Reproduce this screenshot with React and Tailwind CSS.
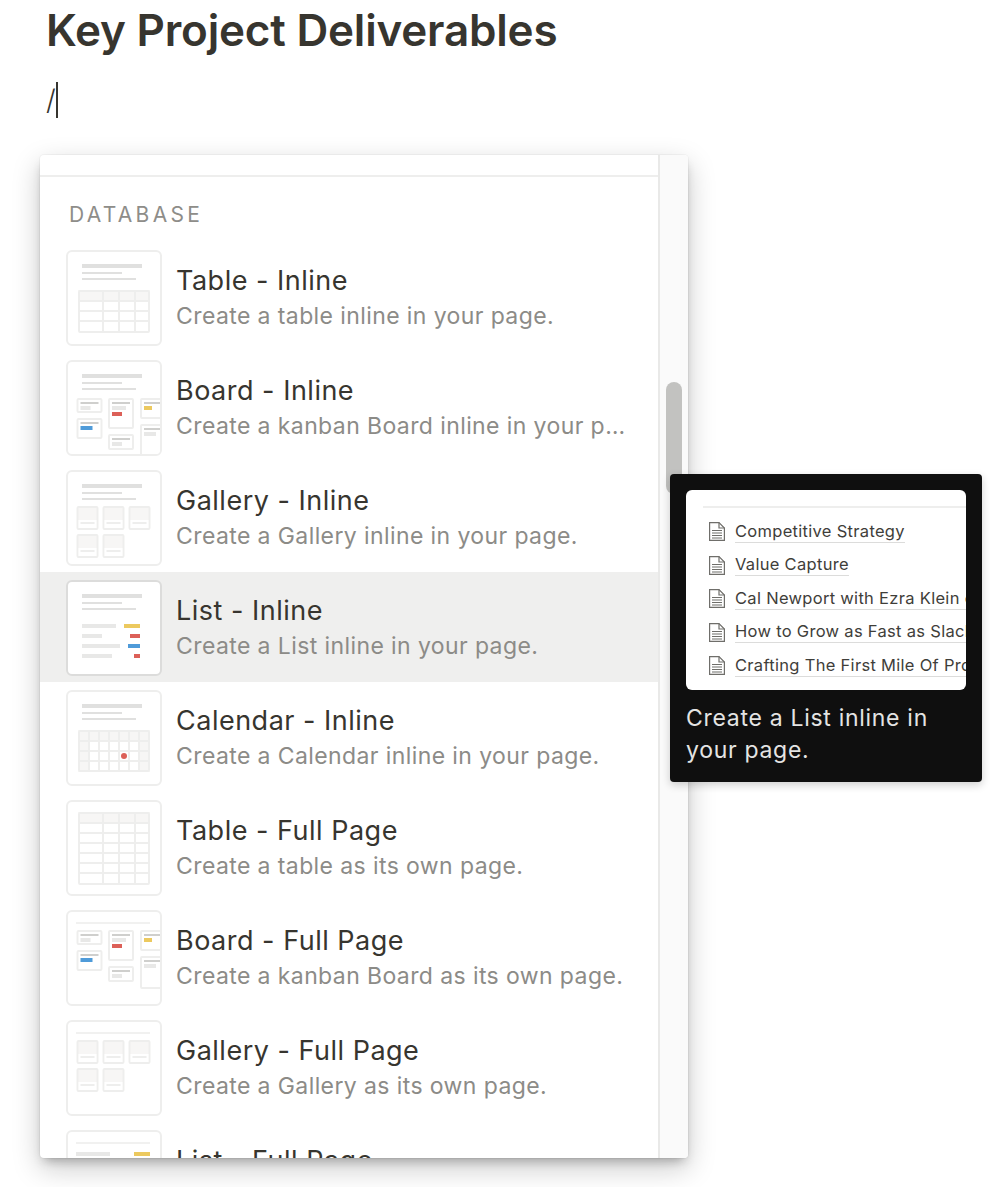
import React from "react";

const LINE = "#eeeeed";
const FILL = "#f7f6f5";
const SOFT = "#e8e8e7";
const MID = "#cfcfcd";
const RED = "#dc6058";
const BLUE = "#4f9bd9";
const YELLOW = "#ecc95f";

function Heading() {
  return (
    <g>
      <rect x="15" y="14" width="60" height="4" fill="#e0e0df" />
      <rect x="15" y="22" width="40" height="2" fill="#e0e0df" />
      <rect x="15" y="28" width="54" height="2" fill="#e0e0df" />
    </g>
  );
}

function TopLine() {
  return <rect x="9" y="12" width="74" height="2" fill="#f1f1f0" />;
}

function TableGrid({ y, rows }) {
  const h = rows * 10 + 2;
  return (
    <g>
      <rect x="11" y={y} width="72" height="12" fill={FILL} />
      <rect x="12" y={y + 1} width="70" height={h - 1} fill="none" stroke={LINE} strokeWidth="2" rx="1" />
      {[24, 40, 56].map((x) => (
        <rect key={x} x={x + 11} y={y} width="2" height={h + 1} fill={LINE} />
      ))}
      {Array.from({ length: rows - 1 }).map((_, i) => (
        <rect key={i} x="11" y={y + 10 + i * 10} width="72" height="2" fill={LINE} />
      ))}
    </g>
  );
}

function Card({ x, y, w = 26, h, block, bw = 10, color, cw = 10 }) {
  return (
    <g>
      <rect x={x + 1} y={y + 1} width={w - 2} height={h - 2} fill="#fff" stroke={LINE} strokeWidth="2" rx="1" />
      <rect x={x + 4} y={y + 4} width={w - 8} height="2" fill={MID} />
      {block && <rect x={x + 4} y={y + 8} width={bw} height="4" fill={SOFT} />}
      {color && <rect x={x + 4} y={block ? y + 14 : y + 8} width={cw} height="4" fill={color} />}
    </g>
  );
}

function BoardCards({ dy, tall }) {
  return (
    <g transform={`translate(0 ${dy})`}>
      <Card x={9.5} y={38} h={15} block />
      <Card x={9.5} y={58} h={21} color={BLUE} cw={12} />
      <Card x={41} y={38} h={31} block bw={14} color={RED} />
      <Card x={41} y={74} h={16} block />
      <Card x={73} y={38} h={21} color={YELLOW} cw={8} />
      <Card x={73} y={64} h={tall} block bw={12} />
    </g>
  );
}

function GalleryCard({ x, y }) {
  return (
    <g>
      <rect x={x + 1} y={y + 1} width="20" height="22" fill={FILL} stroke={LINE} strokeWidth="2" rx="1" />
      <rect x={x + 2} y={y + 14} width="18" height="8" fill="#fff" />
      <rect x={x + 4} y={y + 16} width="14" height="2" fill={LINE} />
    </g>
  );
}

function GalleryCards({ y }) {
  return (
    <g>
      <GalleryCard x={9.5} y={y} />
      <GalleryCard x={35.5} y={y} />
      <GalleryCard x={61.5} y={y} />
      <GalleryCard x={9.5} y={y + 28} />
      <GalleryCard x={35.5} y={y + 28} />
    </g>
  );
}

function CalendarGrid() {
  return (
    <g>
      <rect x="11" y="40" width="72" height="42" fill="#fff" />
      <rect x="11" y="40" width="72" height="12" fill={FILL} />
      <rect x="11" y="40" width="11" height="42" fill={FILL} />
      <rect x="72" y="40" width="11" height="42" fill={FILL} />
      <rect x="12" y="41" width="70" height="40" fill="none" stroke={LINE} strokeWidth="2" rx="1" />
      {[21, 31, 41, 51, 61, 71].map((x) => (
        <rect key={x} x={x} y="40" width="2" height="42" fill={LINE} />
      ))}
      {[50, 60, 70].map((y) => (
        <rect key={y} x="11" y={y} width="72" height="2" fill={LINE} />
      ))}
      <circle cx="57" cy="66" r="3" fill={RED} />
    </g>
  );
}

function Thumb({ kind, active }) {
  let body = null;
  if (kind === "table") {
    body = (
      <>
        <Heading />
        <TableGrid y={40} rows={4} />
      </>
    );
  } else if (kind === "board") {
    body = (
      <>
        <Heading />
        <BoardCards dy={0} tall={34} />
      </>
    );
  } else if (kind === "gallery") {
    body = (
      <>
        <Heading />
        <GalleryCards y={36} />
      </>
    );
  } else if (kind === "list") {
    body = (
      <>
        <Heading />
        <rect x="15" y="44" width="34" height="4" fill={SOFT} />
        <rect x="57" y="44" width="16" height="4" fill={YELLOW} />
        <rect x="15" y="54" width="20" height="4" fill={SOFT} />
        <rect x="63" y="54" width="10" height="4" fill={RED} />
        <rect x="15" y="64" width="38" height="4" fill={SOFT} />
        <rect x="61" y="64" width="12" height="4" fill={BLUE} />
        <rect x="15" y="74" width="30" height="4" fill={SOFT} />
        <rect x="67" y="74" width="6" height="4" fill={RED} />
      </>
    );
  } else if (kind === "calendar") {
    body = (
      <>
        <Heading />
        <CalendarGrid />
      </>
    );
  } else if (kind === "tableFull") {
    body = <TableGrid y={12} rows={7} />;
  } else if (kind === "boardFull") {
    body = (
      <>
        <TopLine />
        <BoardCards dy={-18} tall={33} />
      </>
    );
  } else if (kind === "galleryFull") {
    body = (
      <>
        <TopLine />
        <GalleryCards y={20} />
      </>
    );
  } else if (kind === "listFull") {
    body = (
      <>
        <TopLine />
        <rect x="9" y="22" width="34" height="4" fill={SOFT} />
        <rect x="67" y="22" width="16" height="4" fill={YELLOW} />
      </>
    );
  }

  return (
    <div
      className={`w-24 h-24 shrink-0 bg-white rounded-[6px] border-2 overflow-hidden ${
        active ? "border-[#dcdcdb]" : "border-[#eeeeed]"
      }`}
    >
      <svg width="92" height="92" viewBox="1 2 92 92" className="block">
        {body}
      </svg>
    </div>
  );
}

const rows = [
  { kind: "table", title: "Table - Inline", desc: "Create a table inline in your page." },
  { kind: "board", title: "Board - Inline", desc: "Create a kanban Board inline in your page." },
  { kind: "gallery", title: "Gallery - Inline", desc: "Create a Gallery inline in your page." },
  { kind: "list", title: "List - Inline", desc: "Create a List inline in your page.", active: true },
  { kind: "calendar", title: "Calendar - Inline", desc: "Create a Calendar inline in your page." },
  { kind: "tableFull", title: "Table - Full Page", desc: "Create a table as its own page." },
  { kind: "boardFull", title: "Board - Full Page", desc: "Create a kanban Board as its own page." },
  { kind: "galleryFull", title: "Gallery - Full Page", desc: "Create a Gallery as its own page." },
  { kind: "listFull", title: "List - Full Page", desc: "Create a List as its own page." },
];

function Row({ kind, title, desc, active }) {
  return (
    <div
      className={`h-[110px] shrink-0 flex items-start pt-2 pl-[26px] pr-[31px] ${
        active ? "bg-[#efefee]" : ""
      }`}
    >
      <Thumb kind={kind} active={active} />
      <div className="ml-[14px] min-w-0 flex-1 pt-[13px]">
        <div className="text-[27px] leading-[36px] tracking-[0.5px] text-[#37352f] truncate">{title}</div>
        <div className="text-[23px] leading-[34px] tracking-[0.4px] text-[#8c8b87] truncate">{desc}</div>
      </div>
    </div>
  );
}

function PageIcon() {
  return (
    <svg width="16" height="19" viewBox="0 0 16 19" className="shrink-0" fill="none" stroke="#6f6e6a" strokeWidth="1.2">
      <path d="M0.6 0.6H10L15.4 6V18.4H0.6Z" />
      <path d="M10 0.6V6H15.4" />
      <path d="M3 8.5H13M3 11H13M3 13.5H13M3 16H13" />
    </svg>
  );
}

const pages = [
  "Competitive Strategy",
  "Value Capture",
  "Cal Newport with Ezra Klein on Deep Work",
  "How to Grow as Fast as Slack and Zoom",
  "Crafting The First Mile Of Product",
  "Untitled",
];

function Tooltip() {
  return (
    <div className="absolute left-[630px] top-[319px] w-[312px] h-[308px] bg-[#0f0f0f] rounded-[4px] p-4 shadow-[0_3px_8px_rgba(15,15,15,0.2)]">
      <div className="w-[280px] h-[200px] bg-white rounded-[6px] overflow-hidden pl-[17px] pt-4">
        <div className="h-[2px] bg-[#eeeeed]" />
        <div className="flex flex-col gap-[10.5px] pt-[12px] pl-[6px]">
          {pages.map((p) => (
            <div key={p} className="flex items-center gap-[10px] h-[23px]">
              <PageIcon />
              <span className="text-[16.5px] leading-[21px] font-normal tracking-[0.3px] text-[#3f3e3a] whitespace-nowrap border-b border-[#dcdcdb]">
                {p}
              </span>
            </div>
          ))}
        </div>
      </div>
      <div className="mt-[12px] text-[23px] leading-[32px] tracking-[0.7px] text-[#e4e4e3]">
        Create a List inline in your page.
      </div>
    </div>
  );
}

export default function App() {
  return (
    <div className="w-[1006px] h-[1187px] overflow-hidden bg-white font-['Inter',sans-serif]">
      <h1 className="pl-[46px] h-[60px] text-[44px] leading-[60px] font-semibold tracking-[-0.2px] text-[#37352f] whitespace-nowrap">
        Key Project Deliverables
      </h1>
      <div className="pl-[46px] h-[95px] pt-[22px] flex items-start">
        <span className="text-[28px] leading-[36px] font-light text-[#37352f]">/</span>
        <span className="w-[2px] h-[36px] bg-[#37352f]" />
      </div>
      <div className="relative ml-10 w-[648px]">
        <div className="h-[1003px] flex overflow-hidden bg-white rounded-[4px] shadow-[0_0_0_1px_rgba(15,15,15,0.03),0_6px_10px_-4px_rgba(15,15,15,0.3),0_10px_28px_rgba(15,15,15,0.22)]">
          <div className="w-[618px] shrink-0 overflow-hidden">
            <div className="h-[22px] border-b-2 border-[#eeeeed]" />
            <div className="h-[65px] pl-[29px] pt-[26px] text-[21px] leading-[24px] tracking-[3.3px] text-[#8e8d89]">
              DATABASE
            </div>
            <div className="flex flex-col">
              {rows.map((r) => (
                <Row key={r.title} {...r} />
              ))}
            </div>
          </div>
          <div className="flex-1 bg-[#fafafa] border-l-2 border-[#e9e9e8] flex justify-center">
            <div className="mt-[227px] w-4 h-[112px] rounded-lg bg-[#c2c2c0]" />
          </div>
        </div>
        <Tooltip />
      </div>
    </div>
  );
}
